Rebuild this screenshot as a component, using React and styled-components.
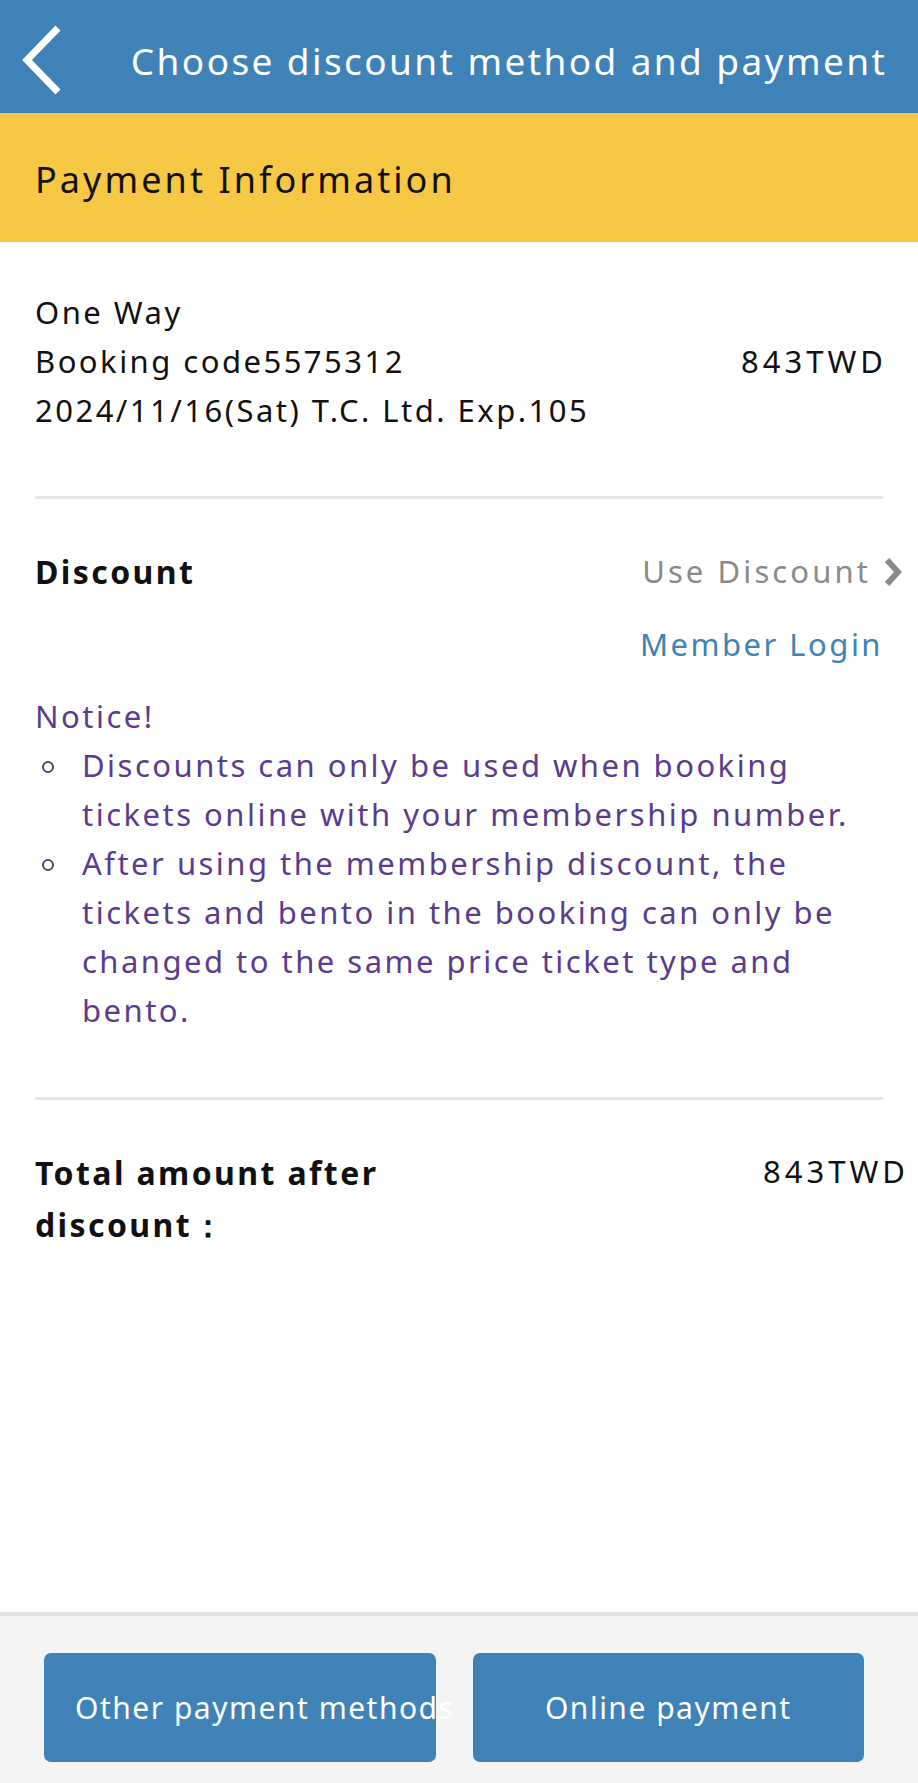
import React from 'react';
import styled, { createGlobalStyle } from 'styled-components';

const GlobalStyle = createGlobalStyle`
    html, body {
        margin: 0;
        padding: 0;
        background: #ffffff;
    }
    body {
        font-family: "Noto Sans", "Liberation Sans", sans-serif;
        color: #111111;
    }
    * {
        box-sizing: border-box;
    }
`

// #region Styles

const Page = styled.div`
    display: flex;
    flex-direction: column;
    min-height: 100vh;
    width: 100%;
`

const Header = styled.header`
    display: flex;
    align-items: center;
    height: 113px;
    padding-top: 7px;
    background: #3e82b7;
    color: #ffffff;
`

const BackButton = styled.div`
    display: flex;
    align-items: center;
    width: 100px;
    padding-left: 20px;
`

const Title = styled.h1`
    flex: 1;
    margin: 0;
    text-align: center;
    font-size: 37px;
    font-weight: 400;
    letter-spacing: 0.065em;
    white-space: nowrap;
`

const SectionBar = styled.div`
    display: flex;
    align-items: center;
    height: 129px;
    padding: 3px 35px 0 35px;
    background: #f6c843;
    font-size: 36px;
    letter-spacing: 0.085em;
`

const Content = styled.main`
    flex: 1;
    padding: 0 35px;
    font-size: 31px;
    line-height: 49px;
    letter-spacing: 0.08em;
`

const Block = styled.section`
    padding: ${props => props.$pad};
    border-bottom: ${props => props.$divider ? '3px solid #e6e6e6' : 'none'};
`

const Row = styled.div`
    display: flex;
    justify-content: space-between;
    align-items: flex-start;
`

const Strong = styled.div`
    font-size: 32px;
    font-weight: 700;
    letter-spacing: 0.075em;
    line-height: ${props => props.$lh || '49px'};
`

const UseDiscount = styled.div`
    display: flex;
    align-items: center;
    color: #8a8a8a;
    letter-spacing: 0.1em;
    margin-right: -19px;
    svg {
        margin-left: 12px;
    }
`

const MemberLogin = styled.div`
    margin-top: 24px;
    text-align: right;
    color: #3e82b7;
`

const Notice = styled.div`
    margin-top: 23px;
    color: #5c3b8e;
`

const NoticeList = styled.ul`
    margin: 0;
    padding: 0;
    list-style: none;
`

const NoticeItem = styled.li`
    display: grid;
    grid-template-columns: 47px 1fr;
`

const Bullet = styled.span`
    width: 12px;
    height: 12px;
    margin: 20px 0 0 7px;
    border: 2px solid #5c3b8e;
    border-radius: 50%;
`

const Price = styled.div`
    letter-spacing: 0.13em;
    margin-right: ${props => props.$shift || '-4px'};
`

const Footer = styled.footer`
    display: flex;
    gap: 37px;
    height: 171px;
    padding: 37px 54px 0 44px;
    border-top: 4px solid #e3e3e3;
    background: #f4f4f5;
`

const PayButton = styled.div`
    flex: 1 1 0;
    min-width: 0;
    height: 109px;
    padding: 0 31px;
    border-radius: 7px;
    background: #3e82b7;
    color: #ffffff;
    font-size: 30px;
    line-height: 109px;
    letter-spacing: 0.05em;
    text-align: center;
    white-space: nowrap;
`

// #endregion

export default function App() {
    return (
        <>
            <GlobalStyle />
            <Page>
                <Header>
                    <BackButton>
                        <svg width="44" height="72" viewBox="0 0 44 72">
                            <polyline points="38,4 7,36 38,68" fill="none" stroke="#ffffff" strokeWidth="7" strokeLinejoin="miter" />
                        </svg>
                    </BackButton>
                    <Title>Choose discount method and payment</Title>
                </Header>
                <SectionBar>Payment Information</SectionBar>
                <Content>
                    <Block $pad="46px 0 61px 0" $divider>
                        <div>One Way</div>
                        <Row>
                            <div>Booking code5575312</div>
                            <Price>843TWD</Price>
                        </Row>
                        <div>2024/11/16(Sat) T.C. Ltd. Exp.105</div>
                    </Block>
                    <Block $pad="48px 0 62px 0" $divider>
                        <Row>
                            <Strong>Discount</Strong>
                            <UseDiscount>
                                Use Discount
                                <svg width="19" height="32" viewBox="0 0 19 32">
                                    <polyline points="4,4 15,16 4,28" fill="none" stroke="#8a8a8a" strokeWidth="6" />
                                </svg>
                            </UseDiscount>
                        </Row>
                        <MemberLogin>Member Login</MemberLogin>
                        <Notice>
                            Notice!
                            <NoticeList>
                                <NoticeItem>
                                    <Bullet />
                                    <span>Discounts can only be used when booking<br />tickets online with your membership number.</span>
                                </NoticeItem>
                                <NoticeItem>
                                    <Bullet />
                                    <span>After using the membership discount, the<br />tickets and bento in the booking can only be<br />changed to the same price ticket type and<br />bento.</span>
                                </NoticeItem>
                            </NoticeList>
                        </Notice>
                    </Block>
                    <Block $pad="47px 0 0 0">
                        <Row>
                            <Strong $lh="52px">Total amount after<br />discount：</Strong>
                            <Price $shift="-26px">843TWD</Price>
                        </Row>
                    </Block>
                </Content>
                <Footer>
                    <PayButton>Other payment methods</PayButton>
                    <PayButton>Online payment</PayButton>
                </Footer>
            </Page>
        </>
    );
}
